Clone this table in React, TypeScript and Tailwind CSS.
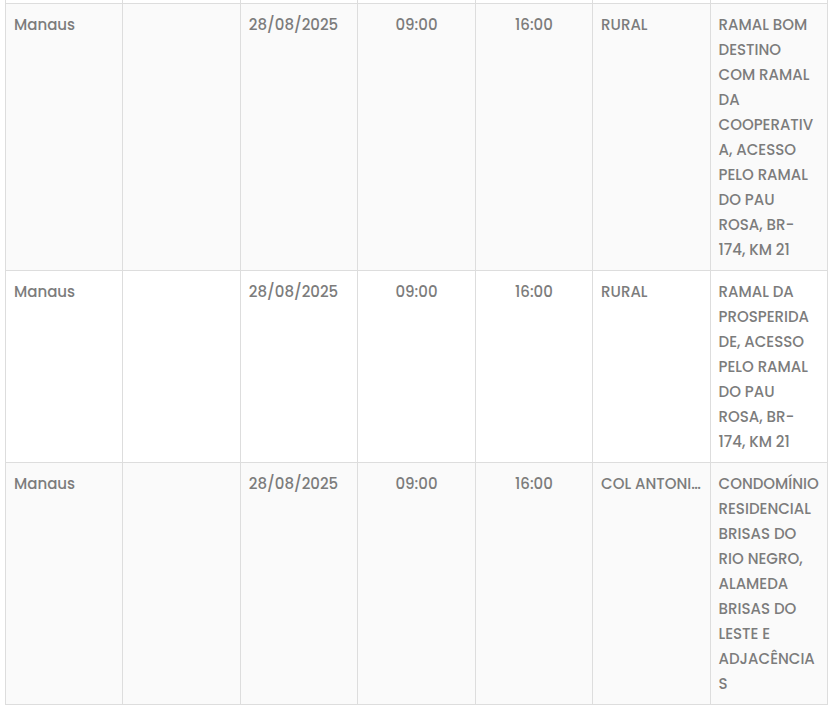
const rows = [
  {
    city: "Manaus",
    date: "28/08/2025",
    start: "09:00",
    end: "16:00",
    area: "RURAL",
    place: [
      "RAMAL BOM",
      "DESTINO",
      "COM RAMAL",
      "DA",
      "COOPERATIV",
      "A, ACESSO",
      "PELO RAMAL",
      "DO PAU",
      "ROSA, BR-",
      "174, KM 21",
    ],
  },
  {
    city: "Manaus",
    date: "28/08/2025",
    start: "09:00",
    end: "16:00",
    area: "RURAL",
    place: ["RAMAL DA", "PROSPERIDA", "DE, ACESSO", "PELO RAMAL", "DO PAU", "ROSA, BR-", "174, KM 21"],
  },
  {
    city: "Manaus",
    date: "28/08/2025",
    start: "09:00",
    end: "16:00",
    area: "COL ANTONIO ALEIXO",
    place: [
      "CONDOMÍNIO",
      "RESIDENCIAL",
      "BRISAS DO",
      "RIO NEGRO,",
      "ALAMEDA",
      "BRISAS DO",
      "LESTE E",
      "ADJACÊNCIA",
      "S",
    ],
  },
]

const td = "border border-[#dddddd] px-2 py-2 align-top"

export default function App() {
  return (
    <div className="min-h-screen overflow-hidden bg-white pl-[5px] font-['Poppins','Inter',sans-serif] text-[15px] font-medium leading-[25px] text-[#7c7c7c]">
      <table className="w-[823px] table-fixed border-collapse">
        <tbody>
          <tr className="h-[3px] bg-white">
            {Array.from({ length: 7 }).map((_, i) => (
              <td key={i} className="border-x border-b border-[#dddddd] p-0" />
            ))}
          </tr>
          {rows.map((r, i) => (
            <tr key={i} className={i % 2 === 0 ? "bg-[#fafafa]" : "bg-white"}>
              <td className={td}>{r.city}</td>
              <td className={td}></td>
              <td className={td}>{r.date}</td>
              <td className={`${td} text-center`}>{r.start}</td>
              <td className={`${td} text-center`}>{r.end}</td>
              <td className={td}>
                <div className="truncate">{r.area}</div>
              </td>
              <td className={td}>
                {r.place.map((l, j) => (
                  <div key={j} className="whitespace-nowrap">
                    {l}
                  </div>
                ))}
              </td>
            </tr>
          ))}
        </tbody>
      </table>
    </div>
  )
}
